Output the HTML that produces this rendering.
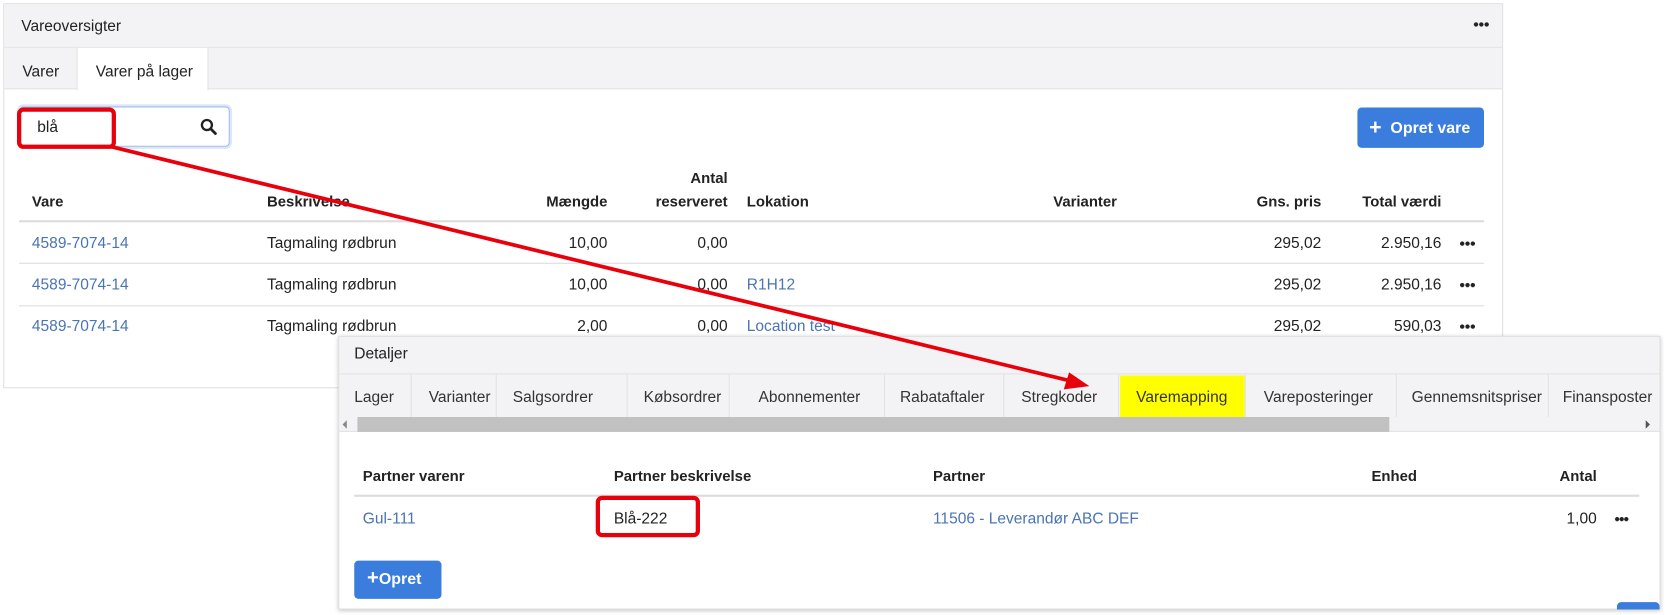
<!DOCTYPE html>
<html><head><meta charset="utf-8"><style>
*{box-sizing:border-box;margin:0;padding:0}
body{width:1668px;height:614px;background:#fff;position:relative;overflow:hidden;font-family:"Liberation Sans",sans-serif;font-size:14.6px;color:#222}
#w{position:absolute;left:0;top:0;width:1568px;height:578px;transform:scale(1.0638);transform-origin:0 0}
.a{position:absolute;white-space:nowrap;line-height:16px}
.b{font-weight:bold;font-size:14px}
.r{text-align:right}
.l{color:#4a74b4}
.ln{position:absolute;height:1px;background:#dcdcdc}
.dots{position:absolute;width:15px;height:4px;background:radial-gradient(circle,#222 1.9px,transparent 2.1px) 0 0/5px 4px repeat-x}
.sep{position:absolute;width:1px;background:#e2e2e2}
</style></head><body><div id="w">
<div style="position:absolute;left:3px;top:3px;width:1410px;height:362px;border:1px solid #e0e0e0;background:#fff"></div>
<div style="position:absolute;left:4px;top:4px;width:1408px;height:41px;background:#f3f3f5;border-bottom:1px solid #e2e2e2"></div>
<div class="a" style="left:20px;top:17px">Vareoversigter</div>
<div class="dots" style="left:1385px;top:21px"></div>
<div style="position:absolute;left:4px;top:45px;width:1408px;height:39px;background:#f3f3f5;border-bottom:1px solid #e2e2e2"></div>
<div style="position:absolute;left:72px;top:45px;width:124px;height:40px;background:#fff;border-left:1px solid #e2e2e2;border-right:1px solid #e2e2e2"></div>
<div class="a" style="left:21px;top:60px">Varer</div>
<div class="a" style="left:90px;top:60px">Varer på lager</div>
<div style="position:absolute;left:18px;top:100px;width:198px;height:38px;border:1px solid #9dbbe8;border-radius:4px;box-shadow:0 0 0 2px #dbe7f8"></div>
<div class="a" style="left:35px;top:112px">blå</div>
<svg style="position:absolute;left:188px;top:111px" width="16" height="16" viewBox="0 0 16 16"><circle cx="6.5" cy="6.5" r="4.7" fill="none" stroke="#222" stroke-width="2.2"/><path d="M10 10l4.5 4.5" stroke="#222" stroke-width="2.6" stroke-linecap="round"/></svg>
<div style="position:absolute;left:1276px;top:101px;width:119px;height:38px;background:#3b7ddd;border-radius:4px"></div>
<div class="a b" style="left:1287px;top:111px;color:#fff;font-size:15px"><span style="font-size:20px;position:relative;top:1px">+</span>&nbsp; Opret vare</div>
<div class="a b" style="left:30px;top:181px">Vare</div>
<div class="a b" style="left:251px;top:181px">Beskrivelse</div>
<div class="a b r" style="left:471px;width:100px;top:181px">Mængde</div>
<div class="a b r" style="left:584px;width:100px;top:159px">Antal</div>
<div class="a b r" style="left:584px;width:100px;top:181px">reserveret</div>
<div class="a b" style="left:702px;top:181px">Lokation</div>
<div class="a b r" style="left:900px;width:150px;top:181px">Varianter</div>
<div class="a b r" style="left:1142px;width:100px;top:181px">Gns. pris</div>
<div class="a b r" style="left:1255px;width:100px;top:181px">Total værdi</div>
<div class="ln" style="left:18px;top:207px;width:1377px;height:2px"></div>
<div class="ln" style="left:18px;top:247px;width:1377px"></div>
<div class="ln" style="left:18px;top:287px;width:1377px"></div>

<div class="a l" style="left:30px;top:221px">4589-7074-14</div>
<div class="a" style="left:251px;top:221px">Tagmaling rødbrun</div>
<div class="a r" style="left:471px;width:100px;top:221px">10,00</div>
<div class="a r" style="left:584px;width:100px;top:221px">0,00</div>
<div class="a r" style="left:1142px;width:100px;top:221px">295,02</div>
<div class="a r" style="left:1255px;width:100px;top:221px">2.950,16</div>
<div class="dots" style="left:1372px;top:227px"></div>

<div class="a l" style="left:30px;top:260px">4589-7074-14</div>
<div class="a" style="left:251px;top:260px">Tagmaling rødbrun</div>
<div class="a r" style="left:471px;width:100px;top:260px">10,00</div>
<div class="a r" style="left:584px;width:100px;top:260px">0,00</div>
<div class="a l" style="left:702px;top:260px">R1H12</div>
<div class="a r" style="left:1142px;width:100px;top:260px">295,02</div>
<div class="a r" style="left:1255px;width:100px;top:260px">2.950,16</div>
<div class="dots" style="left:1372px;top:266px"></div>

<div class="a l" style="left:30px;top:299px">4589-7074-14</div>
<div class="a" style="left:251px;top:299px">Tagmaling rødbrun</div>
<div class="a r" style="left:471px;width:100px;top:299px">2,00</div>
<div class="a r" style="left:584px;width:100px;top:299px">0,00</div>
<div class="a l" style="left:702px;top:299px">Location test</div>
<div class="a r" style="left:1142px;width:100px;top:299px">295,02</div>
<div class="a r" style="left:1255px;width:100px;top:299px">590,03</div>
<div class="dots" style="left:1372px;top:305px"></div>

<div style="position:absolute;left:318px;top:316px;width:1243px;height:257px;background:#fff;border:1px solid #ddd;box-shadow:0 1px 4px rgba(0,0,0,.25)"></div>
<div style="position:absolute;left:319px;top:317px;width:1241px;height:35px;background:#f3f3f5;border-bottom:1px solid #e2e2e2"></div>
<div class="a" style="left:333px;top:325px">Detaljer</div>
<div style="position:absolute;left:319px;top:352px;width:1241px;height:54px;background:#f3f3f5;border-bottom:1px solid #e2e2e2"></div>
<div style="position:absolute;left:1053px;top:353px;width:117px;height:39px;background:#ffff00"></div>
<div class="sep" style="left:386px;top:352px;height:40px"></div>
<div class="sep" style="left:466px;top:352px;height:40px"></div>
<div class="sep" style="left:589px;top:352px;height:40px"></div>
<div class="sep" style="left:685px;top:352px;height:40px"></div>
<div class="sep" style="left:831px;top:352px;height:40px"></div>
<div class="sep" style="left:943px;top:352px;height:40px"></div>
<div class="sep" style="left:1051px;top:352px;height:40px"></div>
<div class="sep" style="left:1170px;top:352px;height:40px"></div>
<div class="sep" style="left:1312px;top:352px;height:40px"></div>
<div class="sep" style="left:1455px;top:352px;height:40px"></div>
<div class="a" style="left:333px;top:366px;color:#333">Lager</div>
<div class="a" style="left:403px;top:366px;color:#333">Varianter</div>
<div class="a" style="left:482px;top:366px;color:#333">Salgsordrer</div>
<div class="a" style="left:605px;top:366px;color:#333">Købsordrer</div>
<div class="a" style="left:713px;top:366px;color:#333">Abonnementer</div>
<div class="a" style="left:846px;top:366px;color:#333">Rabataftaler</div>
<div class="a" style="left:960px;top:366px;color:#333">Stregkoder</div>
<div class="a" style="left:1068px;top:366px;color:#333">Varemapping</div>
<div class="a" style="left:1188px;top:366px;color:#333">Vareposteringer</div>
<div class="a" style="left:1327px;top:366px;color:#333">Gennemsnitspriser</div>
<div class="a" style="left:1469px;top:366px;width:84px;overflow:hidden;color:#333">Finansposter</div>
<div style="position:absolute;left:336px;top:392px;width:970px;height:14px;background:#c1c1c1"></div>
<div style="position:absolute;left:322px;top:395px;border-right:4px solid #888;border-top:4px solid transparent;border-bottom:4px solid transparent"></div>
<div style="position:absolute;left:1547px;top:395px;border-left:4px solid #555;border-top:4px solid transparent;border-bottom:4px solid transparent"></div>
<div class="a b" style="left:341px;top:439px">Partner varenr</div>
<div class="a b" style="left:577px;top:439px">Partner beskrivelse</div>
<div class="a b" style="left:877px;top:439px">Partner</div>
<div class="a b r" style="left:1232px;width:100px;top:439px">Enhed</div>
<div class="a b r" style="left:1401px;width:100px;top:439px">Antal</div>
<div class="ln" style="left:333px;top:465px;width:1208px;height:2px"></div>
<div class="a l" style="left:341px;top:480px">Gul-111</div>
<div class="a" style="left:577px;top:480px">Blå-222</div>
<div class="a l" style="left:877px;top:480px">11506 - Leverandør ABC DEF</div>
<div class="a r" style="left:1401px;width:100px;top:480px">1,00</div>
<div class="dots" style="left:1518px;top:486px;width:13px;background-size:4.3px 4px"></div>
<div style="position:absolute;left:333px;top:527px;width:82px;height:36px;background:#3b7ddd;border-radius:4px"></div>
<div class="a b" style="left:345px;top:536px;color:#fff;font-size:15px"><span style="font-size:19px">+</span>Opret</div>
<div style="position:absolute;left:1520px;top:566px;width:40px;height:7px;background:#3b7ddd;border-radius:4px 4px 0 0"></div>

<div style="position:absolute;left:16px;top:101px;width:93px;height:39px;border:4px solid #e8000b;border-radius:6px"></div>
<div style="position:absolute;left:560px;top:466px;width:98px;height:39px;border:4px solid #e8000b;border-radius:6px"></div>
<svg style="position:absolute;left:0;top:0" width="1568" height="578"><line x1="105" y1="138" x2="1006" y2="358" stroke="#e8000b" stroke-width="3.5"/><polygon points="1024,363 1000,366 1005,350" fill="#e8000b"/></svg>
</div></body></html>
